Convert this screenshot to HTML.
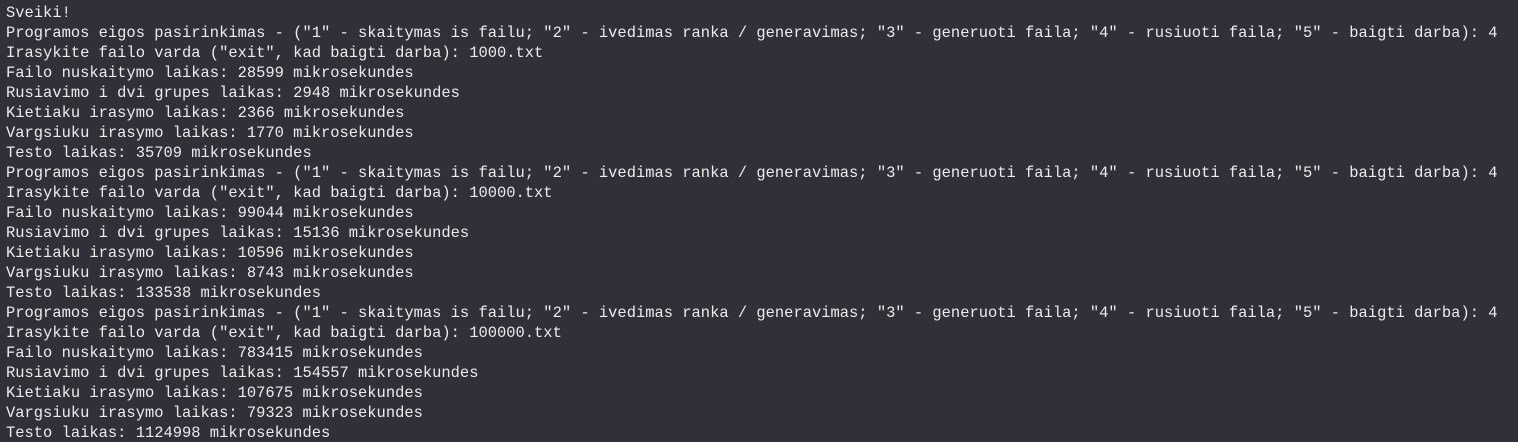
<!DOCTYPE html>
<html><head><meta charset="utf-8"><style>
html,body{margin:0;padding:0;background:#2f3038;width:1518px;height:442px;overflow:hidden}
pre{margin:0;padding:3px 0 0 6px;font-family:"Liberation Mono",monospace;font-size:15.45px;line-height:20px;color:#ececec}
</style></head><body><pre>Sveiki!
Programos eigos pasirinkimas - ("1" - skaitymas is failu; "2" - ivedimas ranka / generavimas; "3" - generuoti faila; "4" - rusiuoti faila; "5" - baigti darba): 4
Irasykite failo varda ("exit", kad baigti darba): 1000.txt
Failo nuskaitymo laikas: 28599 mikrosekundes
Rusiavimo i dvi grupes laikas: 2948 mikrosekundes
Kietiaku irasymo laikas: 2366 mikrosekundes
Vargsiuku irasymo laikas: 1770 mikrosekundes
Testo laikas: 35709 mikrosekundes
Programos eigos pasirinkimas - ("1" - skaitymas is failu; "2" - ivedimas ranka / generavimas; "3" - generuoti faila; "4" - rusiuoti faila; "5" - baigti darba): 4
Irasykite failo varda ("exit", kad baigti darba): 10000.txt
Failo nuskaitymo laikas: 99044 mikrosekundes
Rusiavimo i dvi grupes laikas: 15136 mikrosekundes
Kietiaku irasymo laikas: 10596 mikrosekundes
Vargsiuku irasymo laikas: 8743 mikrosekundes
Testo laikas: 133538 mikrosekundes
Programos eigos pasirinkimas - ("1" - skaitymas is failu; "2" - ivedimas ranka / generavimas; "3" - generuoti faila; "4" - rusiuoti faila; "5" - baigti darba): 4
Irasykite failo varda ("exit", kad baigti darba): 100000.txt
Failo nuskaitymo laikas: 783415 mikrosekundes
Rusiavimo i dvi grupes laikas: 154557 mikrosekundes
Kietiaku irasymo laikas: 107675 mikrosekundes
Vargsiuku irasymo laikas: 79323 mikrosekundes
Testo laikas: 1124998 mikrosekundes</pre></body></html>
